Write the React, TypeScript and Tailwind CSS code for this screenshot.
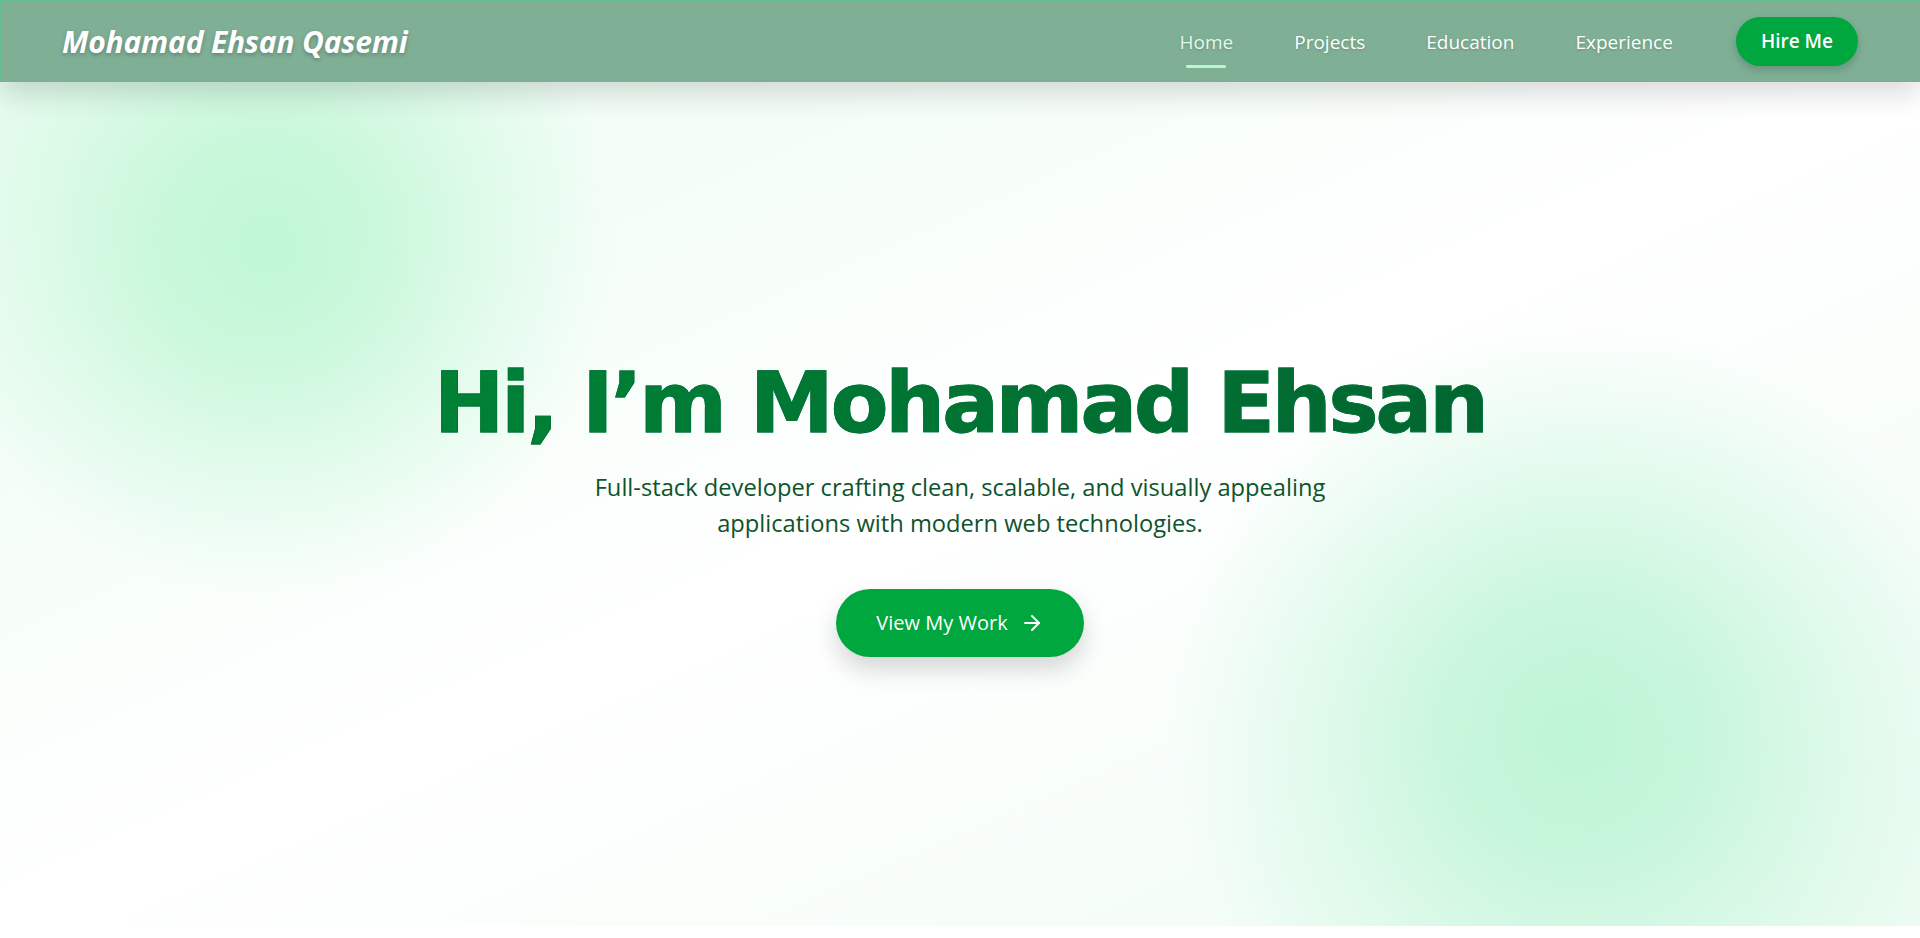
import React from "react";
import { ArrowRight } from "lucide-react";

const sans = "font-['Open_Sans','Noto_Sans',sans-serif]";

export default function App() {
  return (
    <div className={`min-h-screen bg-white ${sans}`}>
      <header className="relative z-10 h-[82px] bg-[#7fb096] border border-[#62bd8c] shadow-[0_12px_28px_rgba(0,0,0,0.14)] flex items-center justify-between px-[61px]">
        <div className="text-[30px] font-bold italic text-white tracking-[-0.2px] [text-shadow:0_2px_4px_rgba(0,0,0,0.25)]">
          Mohamad Ehsan Qasemi
        </div>
        <nav className="flex items-center">
          <ul className="flex items-center gap-[61px] text-[19px] text-white pt-[2px] [text-shadow:0_1px_3px_rgba(0,0,0,0.2)]">
            <li className="relative text-[#e6f7ec]">
              Home
              <span className="absolute left-1/2 -translate-x-1/2 top-[37px] w-10 h-[3px] rounded-full bg-[#b9f8cf]" />
            </li>
            <li>Projects</li>
            <li>Education</li>
            <li>Experience</li>
          </ul>
          <button className="ml-[63px] h-[49px] px-[25px] rounded-full bg-[#00a63e] text-white text-[19px] font-semibold shadow-[0_4px_10px_rgba(0,0,0,0.18)]">
            Hire Me
          </button>
        </nav>
      </header>

      <section className="relative h-[844px] overflow-hidden bg-gradient-to-br from-[#eafcf1] via-white to-[#eefcf3] flex flex-col items-center justify-center pt-[10px]">
        <div className="absolute left-[-80px] top-[-180px] w-[700px] h-[700px] rounded-full bg-[radial-gradient(circle,rgba(125,238,168,0.42)_0%,rgba(125,238,168,0.34)_22%,rgba(125,238,168,0.14)_48%,rgba(125,238,168,0)_70%)]" />
        <div className="absolute left-[1165px] top-[235px] w-[820px] h-[820px] rounded-full bg-[radial-gradient(circle,rgba(120,234,172,0.44)_0%,rgba(120,234,172,0.36)_22%,rgba(120,234,172,0.15)_48%,rgba(120,234,172,0)_70%)]" />

        <h1 className="relative font-['DejaVu_Sans',sans-serif] font-bold text-[84px] leading-[84px] tracking-[-3px] [-webkit-text-stroke:1px_#01743a] bg-gradient-to-r from-[#008236] to-[#016630] bg-clip-text text-transparent">
          Hi, I’m Mohamad Ehsan
        </h1>
        <p className="relative mt-6 max-w-3xl text-center text-[23.7px] leading-[36px] text-[#0d542b]">
          Full-stack developer crafting clean, scalable, and visually appealing applications with modern web technologies.
        </p>
        <button className="relative mt-12 flex items-center gap-3 px-10 py-5 rounded-full bg-[#00a63e] text-white text-[20px] leading-[28px] shadow-[0_12px_24px_rgba(0,0,0,0.16)]">
          View My Work
          <ArrowRight size={24} strokeWidth={2} />
        </button>
      </section>
      <section className="h-3 bg-white" />
    </div>
  );
}
